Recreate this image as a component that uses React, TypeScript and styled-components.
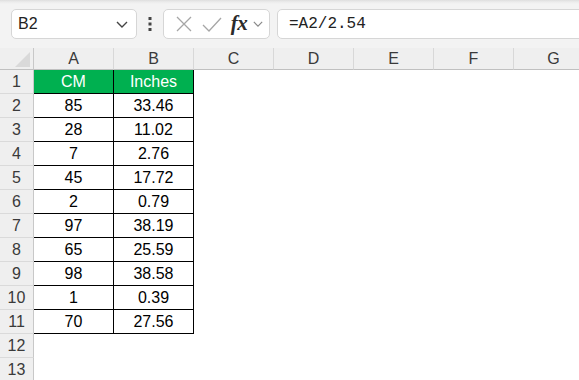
import * as React from 'react';
import styled, { createGlobalStyle } from 'styled-components';

const GlobalStyle = createGlobalStyle`
  html, body {
    margin: 0;
    padding: 0;
    background: #ffffff;
    overflow: hidden;
  }
  body {
    font-family: 'Liberation Sans', Arial, sans-serif;
  }
`;

const COLS = ['A', 'B', 'C', 'D', 'E', 'F', 'G'];

const DATA: [string, string][] = [
  ['CM', 'Inches'],
  ['85', '33.46'],
  ['28', '11.02'],
  ['7', '2.76'],
  ['45', '17.72'],
  ['2', '0.79'],
  ['97', '38.19'],
  ['65', '25.59'],
  ['98', '38.58'],
  ['1', '0.39'],
  ['70', '27.56'],
];

const Page = styled.div`
  width: 579px;
  height: 380px;
  overflow: hidden;
  background: #ffffff;
`;

const Toolbar = styled.div`
  height: 48px;
  box-sizing: border-box;
  display: flex;
  align-items: center;
  padding-left: 11px;
  background: linear-gradient(#dedede 0px, #ececec 2px, #f3f3f3 4px, #f3f3f3 100%);
  overflow: hidden;
`;

const Box = styled.div`
  height: 30px;
  box-sizing: border-box;
  border: 1px solid #d6d6d6;
  border-radius: 5px;
  background: #ffffff;
  display: flex;
  align-items: center;
`;

const NameBox = styled(Box)`
  width: 126px;
  padding: 0 8px 0 6px;
  justify-content: space-between;
  font-size: 16px;
  color: #222;
`;

const Dots = styled.div`
  width: 26px;
  display: flex;
  justify-content: center;
`;

const IconBox = styled(Box)`
  width: 107px;
  padding-left: 7px;
`;

const IconSlot = styled.div<{ $w: number }>`
  width: ${(p) => p.$w}px;
  display: flex;
  align-items: center;
  justify-content: center;
`;

const Fx = styled.span`
  font-family: 'Liberation Serif', 'Times New Roman', serif;
  font-style: italic;
  font-size: 21px;
  font-weight: bold;
  color: #2a2a2a;
  letter-spacing: -0.5px;
  line-height: 1;
  margin-top: -2px;
`;

const FormulaBox = styled(Box)`
  flex: 1;
  margin-left: 7px;
  margin-right: -10px;
  padding-left: 11px;
  font-family: 'Liberation Mono', 'Courier New', monospace;
  font-size: 16px;
  color: #222;
`;

const Sheet = styled.div`
  display: grid;
  grid-template-columns: 34px repeat(7, 80px);
  grid-template-rows: 22px;
  grid-auto-rows: 24px;
`;

const Corner = styled.div`
  background: #efefef;
  border-right: 1px solid #c8c8c8;
  border-bottom: 1px solid #c0c0c0;
  box-sizing: border-box;
  display: flex;
  align-items: flex-end;
  justify-content: flex-end;
  padding: 0 3px 2px 0;
`;

const ColHead = styled.div`
  background: #efefef;
  box-sizing: border-box;
  border-right: 1px solid #d8d8d8;
  border-bottom: 1px solid #c0c0c0;
  display: flex;
  align-items: center;
  justify-content: center;
  font-size: 16px;
  color: #3a3a3a;
  padding-top: 1px;
`;

const RowHead = styled.div`
  background: #efefef;
  box-sizing: border-box;
  border-right: 1px solid #c8c8c8;
  border-bottom: 1px solid #dadada;
  display: flex;
  align-items: center;
  justify-content: center;
  font-size: 16px;
  color: #3a3a3a;
`;

const Cell = styled.div<{ $table?: boolean; $head?: boolean }>`
  box-sizing: border-box;
  display: flex;
  align-items: center;
  justify-content: center;
  font-size: 16px;
  color: ${(p) => (p.$head ? '#ffffff' : '#000000')};
  background: ${(p) => (p.$head ? '#00b050' : '#ffffff')};
  border-right: 1px solid ${(p) => (p.$table ? '#000000' : 'transparent')};
  border-bottom: 1px solid ${(p) => (p.$table ? '#000000' : 'transparent')};
`;

const Chevron = ({ w = 12, color = '#444' }: { w?: number; color?: string }) => (
  <svg width={w} height={w / 2 + 1} viewBox="0 0 12 7">
    <polyline points="1,1 6,6 11,1" fill="none" stroke={color} strokeWidth="1.4" />
  </svg>
);

const App = () => {
  const rows = Array.from({ length: 13 }, (_, i) => i + 1);
  return (
    <Page>
      <GlobalStyle />
      <Toolbar>
        <NameBox>
          <span>B2</span>
          <Chevron />
        </NameBox>
        <Dots>
          <svg width="4" height="14" viewBox="0 0 4 14">
            <rect x="0.5" y="0" width="3" height="3" fill="#444" />
            <rect x="0.5" y="5.5" width="3" height="3" fill="#444" />
            <rect x="0.5" y="11" width="3" height="3" fill="#444" />
          </svg>
        </Dots>
        <IconBox>
          <IconSlot $w={26}>
            <svg width="16" height="16" viewBox="0 0 16 16">
              <path d="M1 1 L15 15 M15 1 L1 15" stroke="#a6a6a6" strokeWidth="1.3" fill="none" />
            </svg>
          </IconSlot>
          <IconSlot $w={30}>
            <svg width="20" height="15" viewBox="0 0 20 15">
              <polyline points="1,8 7,14 19,1" stroke="#a6a6a6" strokeWidth="1.3" fill="none" />
            </svg>
          </IconSlot>
          <IconSlot $w={24}>
            <Fx>fx</Fx>
          </IconSlot>
          <IconSlot $w={13}>
            <Chevron w={10} color="#888" />
          </IconSlot>
        </IconBox>
        <FormulaBox>=A2/2.54</FormulaBox>
      </Toolbar>
      <Sheet>
        <Corner>
          <svg width="15" height="15" viewBox="0 0 15 15">
            <polygon points="15,0 15,15 0,15" fill="#d9d9d9" />
          </svg>
        </Corner>
        {COLS.map((c) => (
          <ColHead key={c}>{c}</ColHead>
        ))}
        {rows.map((r) => (
          <React.Fragment key={r}>
            <RowHead>{r}</RowHead>
            {COLS.map((c, ci) => {
              const rec = DATA[r - 1];
              const inTable = !!rec && ci < 2;
              return (
                <Cell key={c} $table={inTable} $head={inTable && r === 1}>
                  {inTable ? rec[ci] : ''}
                </Cell>
              );
            })}
          </React.Fragment>
        ))}
      </Sheet>
    </Page>
  );
};

export default App;
